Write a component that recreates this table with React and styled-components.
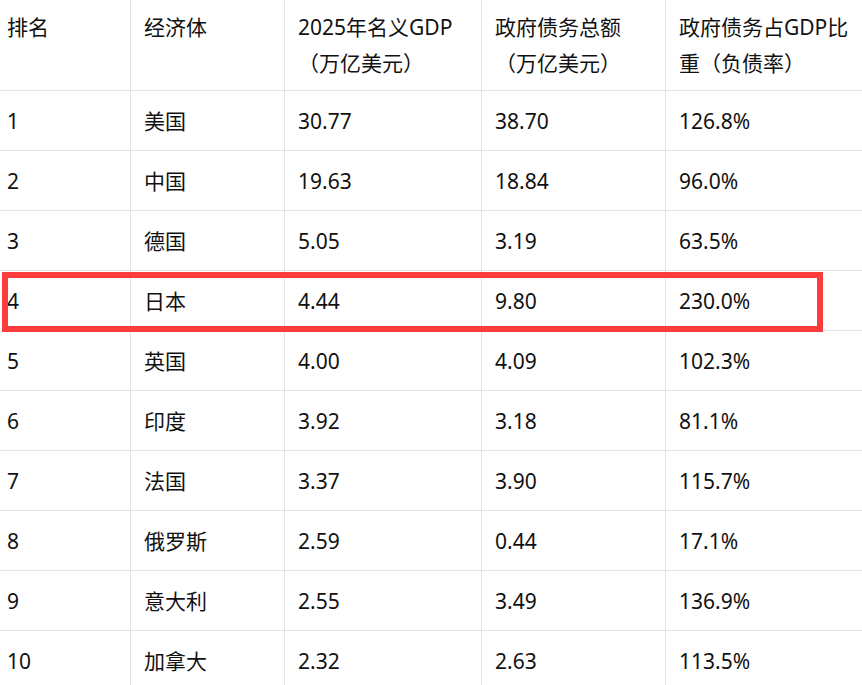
import React from "react"
import styled, { createGlobalStyle } from "styled-components"

const GlobalStyle = createGlobalStyle`
html, body {
  margin: 0;
  padding: 0;
  background: #ffffff;
  overflow: hidden;
}
`

const Wrap = styled.div`
position: relative;
width: 862px;
height: 685px;
overflow: hidden;
font-family: "Noto Sans", "Noto Sans CJK SC", sans-serif;
font-size: 21px;
color: #111111;
`

const Table = styled.table`
table-layout: fixed;
width: 862px;
border-collapse: separate;
border-spacing: 0;
`

const HeadCell = styled.th`
box-sizing: border-box;
height: 91px;
padding: 9px 8px 0 ${p => p.$first ? 7 : 13}px;
text-align: left;
vertical-align: top;
font-weight: normal;
line-height: 36px;
border-bottom: 1px solid #e3e3e3;
border-right: ${p => p.$last ? "none" : "1px solid #e3e3e3"};
`

const Cell = styled.td`
box-sizing: border-box;
height: 60px;
padding: 0 8px 0 ${p => p.$first ? 7 : 13}px;
vertical-align: middle;
line-height: 36px;
white-space: nowrap;
border-bottom: 1px solid #e3e3e3;
border-right: ${p => p.$last ? "none" : "1px solid #e3e3e3"};
`

const Highlight = styled.div`
position: absolute;
left: 2px;
width: 821px;
height: 60px;
box-sizing: border-box;
border: 6px solid #fa3c3c;
pointer-events: none;
`

const widths = [131, 154, 197, 184, 196]

const rows = [
  ["1", "美国", "30.77", "38.70", "126.8%"],
  ["2", "中国", "19.63", "18.84", "96.0%"],
  ["3", "德国", "5.05", "3.19", "63.5%"],
  ["4", "日本", "4.44", "9.80", "230.0%"],
  ["5", "英国", "4.00", "4.09", "102.3%"],
  ["6", "印度", "3.92", "3.18", "81.1%"],
  ["7", "法国", "3.37", "3.90", "115.7%"],
  ["8", "俄罗斯", "2.59", "0.44", "17.1%"],
  ["9", "意大利", "2.55", "3.49", "136.9%"],
  ["10", "加拿大", "2.32", "2.63", "113.5%"],
]

const highlighted = 3

export default function App() {
  return (
    <>
      <GlobalStyle />
      <Wrap>
        <Table>
          <colgroup>
            {widths.map((w, i) => <col key={i} style={{ width: w }} />)}
          </colgroup>
          <thead>
            <tr>
              <HeadCell $first>排名</HeadCell>
              <HeadCell>经济体</HeadCell>
              <HeadCell>2025年名义GDP<br />（万亿美元）</HeadCell>
              <HeadCell>政府债务总额<br />（万亿美元）</HeadCell>
              <HeadCell $last>政府债务占GDP比<br />重（负债率）</HeadCell>
            </tr>
          </thead>
          <tbody>
            {rows.map(r => (
              <tr key={r[0]}>
                {r.map((v, i) => (
                  <Cell key={i} $first={i === 0} $last={i === r.length - 1}>{v}</Cell>
                ))}
              </tr>
            ))}
          </tbody>
        </Table>
        <Highlight style={{ top: 91 + highlighted * 60 + 1 }} />
      </Wrap>
    </>
  )
}
